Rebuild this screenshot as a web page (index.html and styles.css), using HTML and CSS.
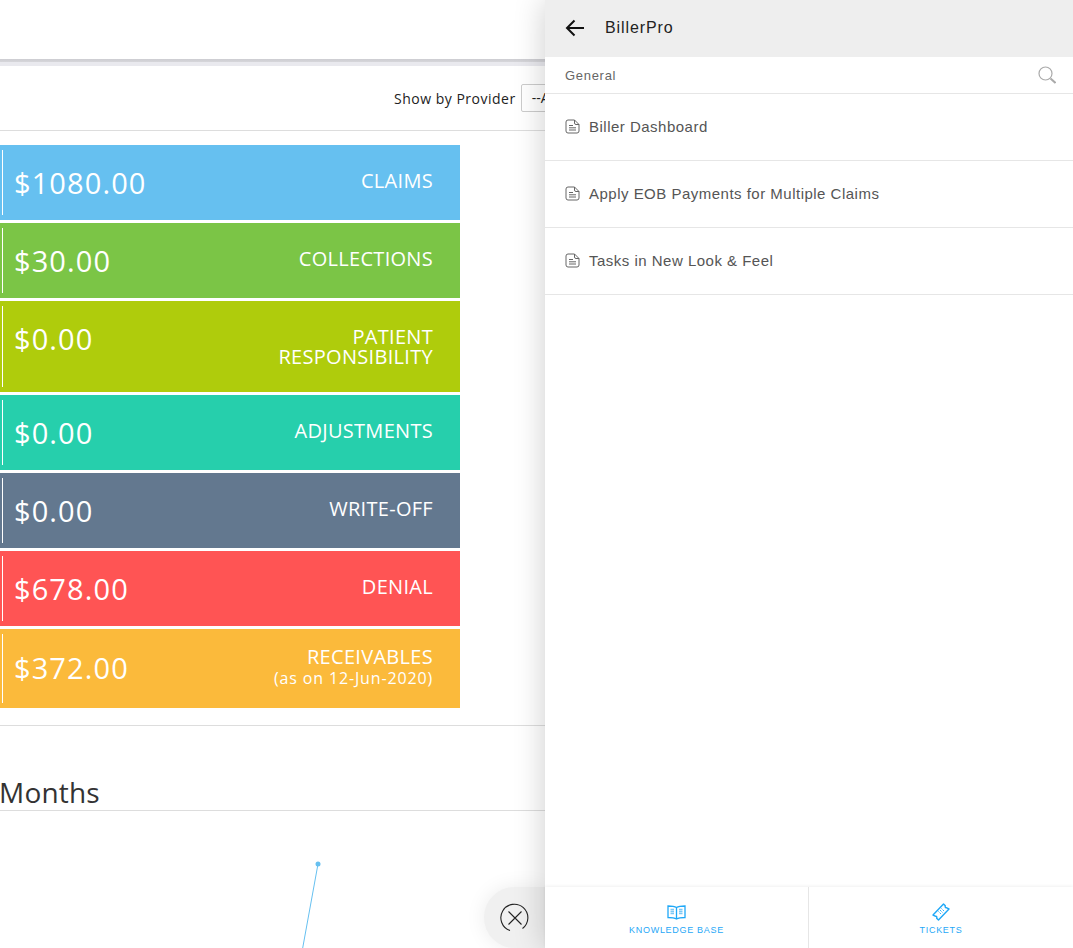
FILE: index.html
```html
<!DOCTYPE html>
<html lang="en">
<head>
    <meta charset="UTF-8">
    <title>BillerPro</title>
    <link rel="stylesheet" href="styles.css">
</head>
<body>
    <div class="page">
        <div class="topbar"></div>
        <div class="filter-row">
            <span>Show by Provider</span>
            <span class="select">--All--</span>
        </div>

        <div class="cards">
            <div class="card claims"><span class="amount">$1080.00</span><span class="label">CLAIMS</span></div>
            <div class="card collections"><span class="amount">$30.00</span><span class="label">COLLECTIONS</span></div>
            <div class="card patient"><span class="amount">$0.00</span><span class="label">PATIENT<br>RESPONSIBILITY</span></div>
            <div class="card adjustments"><span class="amount">$0.00</span><span class="label">ADJUSTMENTS</span></div>
            <div class="card writeoff"><span class="amount">$0.00</span><span class="label">WRITE-OFF</span></div>
            <div class="card denial"><span class="amount">$678.00</span><span class="label">DENIAL</span></div>
            <div class="card receivables"><span class="amount">$372.00</span><span class="label">RECEIVABLES<small>(as on 12-Jun-2020)</small></span></div>
        </div>

        <h2 class="section-title">Months</h2>
        <div class="chart">
            <svg width="540" height="138" viewBox="0 0 540 138">
                <path d="M318 53L302.500 138" fill="none" stroke="#66c0f0" stroke-width="1"/>
                <circle cx="318" cy="53" r="2.500" fill="#66c0f0"/>
            </svg>
        </div>
    </div>

    <button class="close-fab">
        <svg width="30" height="30" viewBox="0 0 30 30"><path d="M22.500 25.500A13.500 13.500 0 1 0 10 27.500" fill="none" stroke="#222" stroke-width="1.100"/><path d="M8.500 8.500l13 13M21.500 8.500l-13 13" stroke="#222" stroke-width="1.100"/></svg>
    </button>

    <!-- help panel -->
    <aside class="panel">
        <header class="panel-head">
            <svg class="back" width="20" height="18" viewBox="0 0 20 18"><path d="M19 9H2M9.500 1.500L2 9l7.500 7.500" fill="none" stroke="#111" stroke-width="2"/></svg>
            <span>BillerPro</span>
        </header>
        <div class="panel-sub">
            <span>General</span>
            <svg width="18" height="18" viewBox="0 0 18 18"><circle cx="7.500" cy="7.500" r="6.500" fill="none" stroke="#aaa" stroke-width="1.200"/><path d="M12.500 12.500L17.500 17" stroke="#aaa" stroke-width="2"/></svg>
        </div>
        <ul class="articles">
            <li><svg class="doc" width="15" height="15" viewBox="0 0 15 15"><path d="M9.500 1H3Q1 1 1 3v9q0 2 2 2h9q2 0 2-2V5.500zM9.500 1v3q0 1.500 1.500 1.500h3M4 6.500h4M4 8.800h7M4 11h7" fill="none" stroke="#666" stroke-width="1"/></svg>Biller Dashboard</li>
            <li><svg class="doc" width="15" height="15" viewBox="0 0 15 15"><path d="M9.500 1H3Q1 1 1 3v9q0 2 2 2h9q2 0 2-2V5.500zM9.500 1v3q0 1.500 1.500 1.500h3M4 6.500h4M4 8.800h7M4 11h7" fill="none" stroke="#666" stroke-width="1"/></svg>Apply EOB Payments for Multiple Claims</li>
            <li><svg class="doc" width="15" height="15" viewBox="0 0 15 15"><path d="M9.500 1H3Q1 1 1 3v9q0 2 2 2h9q2 0 2-2V5.500zM9.500 1v3q0 1.500 1.500 1.500h3M4 6.500h4M4 8.800h7M4 11h7" fill="none" stroke="#666" stroke-width="1"/></svg>Tasks in New Look &amp; Feel</li>
        </ul>
        <footer class="panel-foot">
            <div class="foot-tab">
                <svg class="book" width="19" height="15" viewBox="0 0 19 15"><path d="M9.500 2.500Q7 1 1 1v11.500q6 0 8.500 1.500 2.500-1.500 8.500-1.500V1q-6 0-8.500 1.500zM9.500 2.500V14" fill="none" stroke="#1fa8f7" stroke-width="1.300"/><path d="M3.500 4.500h3.500M3.500 6.500h3.500M3.500 8.500h3.500M12 4.500h3.500M12 6.500h3.500M12 8.500h3.500" stroke="#7cc8f5" stroke-width="1.300"/></svg>
                <span>KNOWLEDGE BASE</span>
            </div>
            <div class="foot-tab">
                <svg width="18" height="18" viewBox="0 0 18 18"><path d="M11.500 1l1.800 1.800q-.6 1.700 1 1.900l2.700 1.300L6.500 17l-1.800-1.800q.6-1.700-1-1.900L1 12z" fill="none" stroke="#1fa8f7" stroke-width="1.400" stroke-linejoin="round"/><path d="M6.500 8.500l3 3M8 7l3 3M9.500 5.500l3 3" stroke="#1fa8f7" stroke-width="1" stroke-dasharray="1.300 .8"/></svg>
                <span>TICKETS</span>
            </div>
        </footer>
    </aside>
</body>
</html>
```

FILE: styles.css
```css
html, body {
    margin: 0;
    padding: 0;
    height: 948px;
    overflow: hidden;
    background: #fff;
}

body {
    font-family: 'Open Sans', sans-serif;
    color: #333;
}

.topbar {
    height: 66px;
    background: linear-gradient(#fff 59px, #cdcdd2 59px, #d6d6da 62px, #e9e9ee 62px);
}

.filter-row {
    height: 64px;
    border-bottom: 1px solid #ddd;
    display: flex;
    align-items: center;
    padding-left: 394px;
    font-size: 14px;
    letter-spacing: 0.500px;
    color: #222;
}

.select {
    margin-left: 5px;
    margin-top: -1px;
    width: 200px;
    height: 28px;
    line-height: 26px;
    box-sizing: border-box;
    border: 1px solid #ccc;
    border-radius: 2px;
    padding-left: 10px;
    flex: none;
    letter-spacing: 0;
}

.cards {
    margin-top: 14px;
    display: flex;
    flex-direction: column;
    gap: 3px;
    padding-bottom: 17px;
    border-bottom: 1px solid #ddd;
}

.card {
    width: 460px;
    height: 75px;
    box-sizing: border-box;
    padding: 10px 27px 0 14px;
    display: flex;
    justify-content: space-between;
    color: #fff;
    position: relative;
}

.card::before {
    content: "";
    position: absolute;
    left: 2px;
    top: 5px;
    bottom: 5px;
    width: 1px;
    background: #fff;
}

.amount {
    font-size: 29px;
    line-height: 56px;
    letter-spacing: 1.100px;
}

.label {
    font-size: 20px;
    line-height: 20px;
    margin-top: 16px;
    text-align: right;
    letter-spacing: 0.300px;
}

.label small {
    display: block;
    font-size: 16px;
    line-height: 22px;
    letter-spacing: 0.850px;
}

.claims { background: #66c0f0; }
.collections { background: #7bc546; }
.patient { background: #afcc0c; height: 91px; }
.adjustments { background: #26cfac; }
.writeoff { background: #63788f; }
.denial { background: #ff5454; }
.receivables { background: #fbba3b; height: 79px; }
.receivables .label { margin-top: 8px; }
.receivables .amount { margin-top: 1px; }

.section-title {
    margin: 49px 0 0;
    height: 35px;
    border-bottom: 1px solid #ddd;
    font-size: 28px;
    font-weight: 400;
    line-height: 34px;
    letter-spacing: 0.200px;
    text-indent: -1px;
    white-space: nowrap;
    color: #333;
}

.chart svg {
    display: block;
}

.panel {
    position: absolute;
    top: 0;
    right: 0;
    bottom: 0;
    width: 528px;
    background: #fff;
    box-shadow: 0 0 30px rgba(0,0,0,0.2);
    display: flex;
    flex-direction: column;
    font-family: 'Liberation Sans', Arial, sans-serif;
}

.panel-head {
    height: 55px;
    padding-bottom: 2px;
    flex: none;
    background: #eee;
    display: flex;
    align-items: center;
    padding-left: 20px;
    font-size: 16px;
    letter-spacing: 0.900px;
    color: #222;
}

.panel-head .back {
    margin-right: 20px;
    margin-top: 1px;
}

.panel-sub {
    height: 36px;
    flex: none;
    border-bottom: 1px solid #e6e6e6;
    display: flex;
    justify-content: space-between;
    align-items: center;
    padding: 0 17px 0 20px;
    font-size: 13px;
    letter-spacing: 0.700px;
    color: #666;
}

.articles {
    list-style: none;
    margin: 0;
    padding: 0;
    flex: 1;
}

.articles li {
    height: 64px;
    padding-bottom: 2px;
    border-bottom: 1px solid #e6e6e6;
    display: flex;
    align-items: center;
    padding-left: 20px;
    font-size: 15px;
    letter-spacing: 0.490px;
    color: #555;
}

.doc {
    margin-right: 9px;
}

.panel-foot {
    height: 61px;
    flex: none;
    display: flex;
    box-shadow: 0 -1px 3px rgba(0,0,0,0.06);
}

.foot-tab {
    width: 263px;
    flex: none;
    display: flex;
    flex-direction: column;
    align-items: center;
    justify-content: flex-end;
    gap: 4px;
    padding-bottom: 13px;
    font-size: 9px;
    letter-spacing: 0.700px;
    color: #1fa8f7;
}

.foot-tab .book {
    margin-bottom: 1px;
}

.foot-tab + .foot-tab {
    width: auto;
    flex: 1;
    border-left: 1px solid #e6e6e6;
}

.close-fab {
    position: absolute;
    left: 484px;
    top: 887px;
    width: 61px;
    height: 61px;
    padding: 0;
    border: 0;
    border-radius: 31px 0 0 31px;
    background: #f0f0f0;
    box-shadow: 0 0 20px rgba(0,0,0,0.08);
    display: flex;
    align-items: center;
    justify-content: center;
}
```
